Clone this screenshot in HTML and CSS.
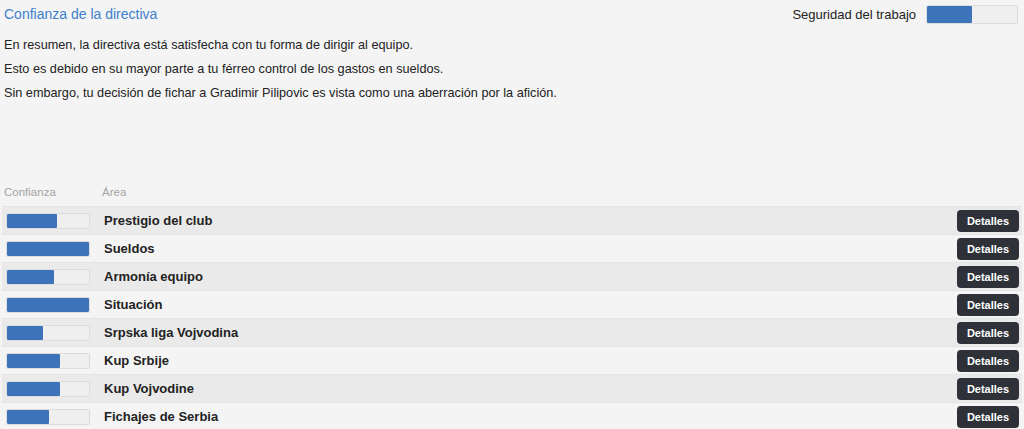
FILE: index.html
```html
<!DOCTYPE html>
<html>
<head>
    <meta charset="UTF-8">
    <title>Confianza de la directiva</title>
    <link rel="stylesheet" href="styles.css">
</head>
<body>
    <div class="page">
        <!-- cabecera -->
        <div class="top">
            <h1 class="title">Confianza de la directiva</h1>
            <div class="security">
                <span>Seguridad del trabajo</span>
                <div class="bar bar-big"><div class="fill" style="width: 50%"></div></div>
            </div>
        </div>
        <div class="summary">
            <p>En resumen, la directiva está satisfecha con tu forma de dirigir al equipo.</p>
            <p>Esto es debido en su mayor parte a tu férreo control de los gastos en sueldos.</p>
            <p>Sin embargo, tu decisión de fichar a Gradimir Pilipovic es vista como una aberración por la afición.</p>
        </div>
        <!-- tabla de áreas -->
        <div class="areas">
            <div class="head">
                <div class="col-bar">Confianza</div>
                <div>Área</div>
            </div>
            <div class="row">
                <div class="col-bar"><div class="bar"><div class="fill" style="width: 61%"></div></div></div>
                <div class="name">Prestigio del club</div>
                <button class="btn">Detalles</button>
            </div>
            <div class="row">
                <div class="col-bar"><div class="bar"><div class="fill" style="width: 100%"></div></div></div>
                <div class="name">Sueldos</div>
                <button class="btn">Detalles</button>
            </div>
            <div class="row">
                <div class="col-bar"><div class="bar"><div class="fill" style="width: 57%"></div></div></div>
                <div class="name">Armonía equipo</div>
                <button class="btn">Detalles</button>
            </div>
            <div class="row">
                <div class="col-bar"><div class="bar"><div class="fill" style="width: 100%"></div></div></div>
                <div class="name">Situación</div>
                <button class="btn">Detalles</button>
            </div>
            <div class="row">
                <div class="col-bar"><div class="bar"><div class="fill" style="width: 44%"></div></div></div>
                <div class="name">Srpska liga Vojvodina</div>
                <button class="btn">Detalles</button>
            </div>
            <div class="row">
                <div class="col-bar"><div class="bar"><div class="fill" style="width: 65%"></div></div></div>
                <div class="name">Kup Srbije</div>
                <button class="btn">Detalles</button>
            </div>
            <div class="row">
                <div class="col-bar"><div class="bar"><div class="fill" style="width: 65%"></div></div></div>
                <div class="name">Kup Vojvodine</div>
                <button class="btn">Detalles</button>
            </div>
            <div class="row">
                <div class="col-bar"><div class="bar"><div class="fill" style="width: 51%"></div></div></div>
                <div class="name">Fichajes de Serbia</div>
                <button class="btn">Detalles</button>
            </div>
        </div>
    </div>
</body>
</html>
```

FILE: styles.css
```css
body {
    margin: 0;
    background-color: #F4F4F4;
    font-family: "Liberation Sans", Arial, sans-serif;
    color: #222;
    overflow: hidden;
}

.page {
    padding: 0 2px;
}

/* cabecera */

.top {
    display: flex;
    align-items: center;
    justify-content: space-between;
    height: 28px;
    padding: 0 4px 0 2px;
}
.title {
    margin: 0;
    font-size: 14px;
    font-weight: normal;
    color: #3F7FCC;
}
.security {
    display: flex;
    align-items: center;
    gap: 10px;
    font-size: 13px;
    color: #222;
}

.summary {
    padding: 5px 2px 0;
    height: 150px;
    box-sizing: border-box;
}
.summary p {
    margin: 0;
    height: 24px;
    line-height: 24px;
    font-size: 12.7px;
}

/* barras */

.bar {
    box-sizing: border-box;
    width: 84px;
    height: 16px;
    border: 1px solid #DCDCDC;
    border-radius: 2px;
    background-color: #EFEFEF;
    overflow: hidden;
}
.bar-big {
    width: 92px;
    height: 19px;
}
.fill {
    height: 100%;
    background-color: #3D73B8;
    border-radius: 1px;
}

/* tabla */

.head {
    display: flex;
    align-items: center;
    height: 28px;
    font-size: 11.5px;
    color: #A4A4A4;
}
.col-bar {
    width: 100px;
    padding-left: 4px;
    box-sizing: border-box;
    flex: none;
}
.head .col-bar {
    padding-left: 2px;
}
.row {
    display: flex;
    align-items: center;
    height: 28px;
    border-top: 1px solid #E4E4E4;
    box-sizing: border-box;
}
.row:nth-child(even) {
    background-color: #EAEAEA;
}
.name {
    flex: 1;
    padding-left: 2px;
    font-size: 13px;
    font-weight: bold;
    color: #222;
}
.btn {
    width: 62px;
    height: 22px;
    margin-right: 3px;
    border: none;
    border-radius: 4px;
    background-color: #2E3138;
    color: #FFF;
    font-family: "Liberation Sans", Arial, sans-serif;
    font-size: 11px;
    font-weight: bold;
}
```
